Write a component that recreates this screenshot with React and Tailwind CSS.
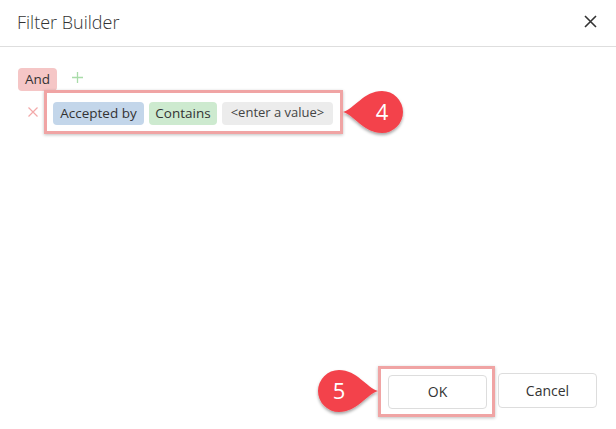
import React from 'react';

const font = { fontFamily: '"Open Sans", "Noto Sans", sans-serif' };

function Callout({ number, flip = false }) {
    // teardrop marker, tip points left by default
    return (
        <svg width="66" height="50" viewBox="0 0 66 50" className="overflow-visible">
            <defs>
                <filter id={`sh${number}`} x="-30%" y="-30%" width="160%" height="170%">
                    <feDropShadow dx="0" dy="2" stdDeviation="1.8" floodColor="#000" floodOpacity="0.35" />
                </filter>
            </defs>
            <g transform={flip ? 'translate(66,0) scale(-1,1)' : undefined}>
                <path
                    d="M1 23 C12 20 22 2 40 2 A21 21 0 0 1 40 44 C22 44 12 26 1 23 Z"
                    fill="#f3434b"
                    filter={`url(#sh${number})`}
                />
            </g>
            <text
                x={flip ? 26 : 40}
                y="31"
                textAnchor="middle"
                fill="#fff"
                fontSize="22"
                style={font}
            >
                {number}
            </text>
        </svg>
    );
}

export default function App() {
    return (
        <div className="w-[616px] h-[429px] bg-white flex flex-col text-[#333]" style={font}>
            {/* Header */}
            <div className="h-[47px] shrink-0 flex items-center justify-between pl-[17px] pr-[18px] border-b border-[#dedede]">
                <h1 className="text-[18px] font-light leading-none text-[#333] pb-[2px]">Filter Builder</h1>
                <button className="w-[16px] h-[16px] flex items-center justify-center mt-[-4px]">
                    <svg width="13" height="13" viewBox="0 0 13 13">
                        <path d="M1 1 L12 12 M12 1 L1 12" stroke="#333" strokeWidth="1.6" />
                    </svg>
                </button>
            </div>

            {/* Body */}
            <div className="flex-1 pl-[18px] pt-[21px]">
                <div className="flex items-center h-[23px]">
                    <span className="h-[23px] px-[7px] flex items-center rounded-[4px] bg-[#f5c6c6] text-[13.5px]">And</span>
                    <svg width="11" height="11" viewBox="0 0 11 11" className="ml-[15px] mt-[-4px]">
                        <path d="M5.5 0 V11 M0 5.5 H11" stroke="#a9dca9" strokeWidth="1.3" />
                    </svg>
                </div>

                <div className="flex items-start mt-[-1px]">
                    <svg width="10" height="10" viewBox="0 0 10 10" className="ml-[10px] mr-[6px] mt-[17px]">
                        <path d="M0.5 0.5 L9.5 9.5 M9.5 0.5 L0.5 9.5" stroke="#f3a9a9" strokeWidth="1.2" />
                    </svg>
                    <div className="h-[44px] w-[299px] border-[3px] border-[#f0a4a4] shadow-[0_1px_3px_rgba(0,0,0,0.25)] flex items-center gap-[5px] pl-[6px] pt-[2px]">
                        <span className="h-[23px] w-[91px] flex items-center justify-center rounded-[4px] bg-[#c3d6ea] text-[13.5px]">Accepted by</span>
                        <span className="h-[23px] w-[68px] flex items-center justify-center rounded-[4px] bg-[#cdeacf] text-[13.5px]">Contains</span>
                        <span className="h-[23px] w-[111px] flex items-center justify-center rounded-[4px] bg-[#ececec] text-[13px] text-[#444]">&lt;enter a value&gt;</span>
                    </div>
                    <div className="ml-[-1px] mt-[-1px]">
                        <Callout number="4" />
                    </div>
                </div>
            </div>

            {/* Footer */}
            <div className="flex justify-end items-center pr-[19px] pb-[11px]">
                <div className="mt-[4px] mr-[-1px]">
                    <Callout number="5" flip />
                </div>
                <div className="w-[117px] h-[51px] border-[3px] border-[#f0a4a4] shadow-[0_1px_3px_rgba(0,0,0,0.25)] flex items-center pl-[7px] pt-[1px]">
                    <button className="w-[99px] h-[34px] rounded-[4px] border border-[#ddd] bg-white text-[14px]">OK</button>
                </div>
                <button className="ml-[3px] mb-[1px] w-[99px] h-[35px] rounded-[4px] border border-[#ddd] bg-white text-[14px]">Cancel</button>
            </div>
        </div>
    );
}
